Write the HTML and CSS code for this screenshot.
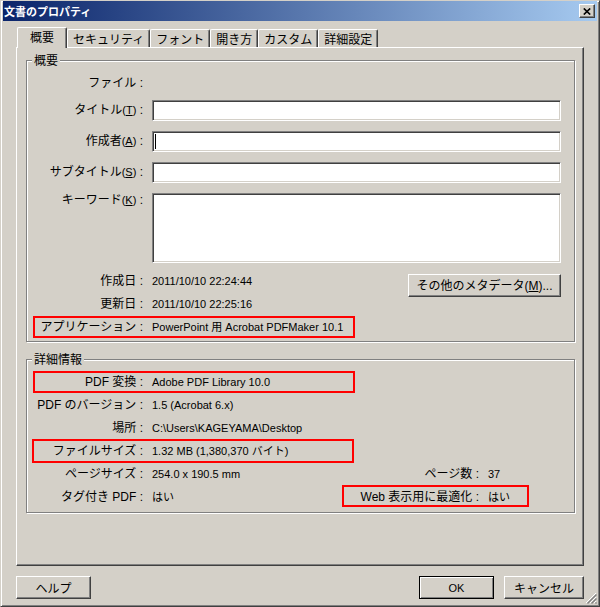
FILE: index.html
```html
<!DOCTYPE html>
<html lang="ja">
<head>
<meta charset="utf-8">
<title>文書のプロパティ</title>
<link rel="stylesheet" href="styles.css">
</head>
<body>
<div class="window">
  <div class="titlebar">
    <span class="title">文書のプロパティ</span>
    <span class="close"><svg width="8" height="7" viewBox="0 0 8 7"><path d="M0.8 0.5 L7.2 6.5 M7.2 0.5 L0.8 6.5" stroke="#000" stroke-width="1.7" fill="none"/></svg></span>
  </div>
  <div class="tabs">
    <div class="tab active">概要</div>
    <div class="tab">セキュリティ</div>
    <div class="tab">フォント</div>
    <div class="tab">開き方</div>
    <div class="tab">カスタム</div>
    <div class="tab">詳細設定</div>
  </div>
  <div class="panel">
    <div class="group g1">
      <div class="group-title">概要</div>
      <div class="row r-file"><div class="label">ファイル :</div></div>
      <div class="row r-field"><div class="label lf">タイトル<span class="ak">(<u>T</u>)</span> :</div><div class="field"></div></div>
      <div class="row r-field"><div class="label lf">作成者<span class="ak">(<u>A</u>)</span> :</div><div class="field"><span class="caret"></span></div></div>
      <div class="row r-field"><div class="label lf">サブタイトル<span class="ak">(<u>S</u>)</span> :</div><div class="field"></div></div>
      <div class="row r-field"><div class="label">キーワード<span class="ak">(<u>K</u>)</span> :</div><div class="field tall"></div></div>
      <div class="row r-date"><div class="label">作成日 :</div><div class="value">2011/10/10 22:24:44</div><div class="btn meta">その他のメタデータ(<u>M</u>)...</div></div>
      <div class="row"><div class="label">更新日 :</div><div class="value">2011/10/10 22:25:16</div></div>
      <div class="row r-app mark"><div class="label">アプリケーション :</div><div class="value">PowerPoint 用 Acrobat PDFMaker 10.1</div></div>
    </div>
    <div class="group g2">
      <div class="group-title">詳細情報</div>
      <div class="row d-row first mark m-conv"><div class="label">PDF 変換 :</div><div class="value">Adobe PDF Library 10.0</div></div>
      <div class="row d-row"><div class="label">PDF のバージョン :</div><div class="value">1.5 (Acrobat 6.x)</div></div>
      <div class="row d-row"><div class="label">場所 :</div><div class="value">C:\Users\KAGEYAMA\Desktop</div></div>
      <div class="row d-row mark m-size"><div class="label">ファイルサイズ :</div><div class="value">1.32 MB (1,380,370 バイト)</div></div>
      <div class="row d-row"><div class="label">ページサイズ :</div><div class="value w">254.0 x 190.5 mm</div><div class="label2">ページ数 :</div><div class="value">37</div></div>
      <div class="row d-row mark m-web"><div class="label">タグ付き PDF :</div><div class="value w">はい</div><div class="label2">Web 表示用に最適化 :</div><div class="value">はい</div></div>
    </div>
  </div>
  <div class="footer">
    <div class="btn help">ヘルプ</div>
    <div class="right">
      <div class="btn ok">OK</div>
      <div class="btn cancel">キャンセル</div>
    </div>
  </div>
  <svg class="grip" width="12" height="12" viewBox="0 0 12 12">
    <path d="M11 1 L1 11 M11 5 L5 11 M11 9 L9 11" stroke="#fff" stroke-width="1" fill="none"/>
    <path d="M11.5 2.5 L2.5 11.5 M11.5 6.5 L6.5 11.5 M11.5 10.5 L10.5 11.5" stroke="#808080" stroke-width="1.4" fill="none"/>
  </svg>
</div>
</body>
</html>
```
FILE: styles.css
```css
html, body {
  margin: 0;
  padding: 0;
  background: #d4d0c8;
}
body {
  font-family: "Noto Sans CJK JP", sans-serif;
  font-size: 12px;
  color: #000;
}
.window {
  position: relative;
  width: 600px;
  height: 607px;
  box-sizing: border-box;
  border: 1px solid;
  border-color: #d4d0c8 #404040 #404040 #d4d0c8;
  box-shadow: inset 1px 1px 0 #fff, inset -1px -1px 0 #808080;
  padding: 0 2px;
  background: #d4d0c8;
}
.titlebar {
  height: 20px;
  display: flex;
  align-items: center;
  justify-content: space-between;
  background: linear-gradient(to right, #0a246a, #a6caf0);
  padding-left: 1px;
}
.title {
  color: #fff;
  font-weight: bold;
  font-size: 11px;
  line-height: 14px;
}
.close {
  width: 16px;
  height: 14px;
  box-sizing: border-box;
  margin-right: 2px;
  background: #d4d0c8;
  border: 1px solid;
  border-color: #fff #404040 #404040 #fff;
  box-shadow: inset -1px -1px 0 #808080;
  display: flex;
  align-items: center;
  justify-content: center;
}
.close svg { display: block; }
.tabs {
  display: flex;
  align-items: flex-end;
  height: 20px;
  margin: 6px 0 0 14px;
}
.tab {
  height: 18px;
  box-sizing: border-box;
  padding: 0 5px;
  line-height: 17px;
  border-top: 1px solid #fff;
  border-left: 1px solid #fff;
  border-right: 1px solid #404040;
  box-shadow: inset -1px 0 0 #808080;
  border-radius: 2px 2px 0 0;
  white-space: nowrap;
}
.tab.active {
  position: relative;
  z-index: 1;
  height: 21px;
  line-height: 18px;
  padding: 0 12px;
  margin-bottom: -1px;
  background: #d4d0c8;
}
.panel {
  width: 568px;
  height: 519px;
  box-sizing: border-box;
  margin-left: 13px;
  border: 1px solid;
  border-color: #fff #404040 #404040 #fff;
  box-shadow: inset -1px -1px 0 #808080;
  padding: 12px 8px 0 9px;
}
.group {
  position: relative;
  box-sizing: border-box;
  border: 1px solid #808080;
  box-shadow: 1px 1px 0 #fff, inset 1px 1px 0 #fff;
  padding: 0 13px 0 0;
}
.g1 { height: 282px; }
.g2 { height: 154px; margin-top: 17px; }
.group-title {
  position: absolute;
  top: -8px;
  left: 5px;
  padding: 0 2px;
  line-height: 14px;
  background: #d4d0c8;
}
.row {
  display: flex;
  align-items: flex-start;
  line-height: 14px;
}
.label {
  width: 116px;
  flex: none;
  text-align: right;
  white-space: nowrap;
  font-family: "Liberation Sans", "Noto Sans CJK JP", sans-serif;
}
.label.lf { line-height: 21px; }
.ak { font-family: "Liberation Sans", sans-serif; font-size: 11px; }
.value {
  margin-left: 9px;
  font-family: "Liberation Sans", "Noto Sans CJK JP", sans-serif;
  font-size: 11px;
  white-space: nowrap;
}
.value.w { width: 197px; flex: none; }
.label2 {
  width: 130px;
  flex: none;
  text-align: right;
  white-space: nowrap;
  font-family: "Liberation Sans", "Noto Sans CJK JP", sans-serif;
}
.r-file { margin-top: 15px; }
.r-field { margin-top: 10px; }
.field {
  flex: 1;
  margin-left: 9px;
  height: 21px;
  box-sizing: border-box;
  background: #fff;
  border: 1px solid;
  border-color: #808080 #fff #fff #808080;
  box-shadow: inset 1px 1px 0 #404040, inset -1px -1px 0 #d4d0c8;
  position: relative;
}
.field.tall { height: 70px; }
.caret {
  position: absolute;
  left: 2px;
  top: 2px;
  width: 1px;
  height: 15px;
  background: #000;
}
.r-date { margin-top: 11px; height: 23px; }
.btn {
  box-sizing: border-box;
  height: 23px;
  background: #d4d0c8;
  border: 1px solid;
  border-color: #fff #404040 #404040 #fff;
  box-shadow: inset -1px -1px 0 #808080;
  display: flex;
  align-items: center;
  justify-content: center;
  white-space: nowrap;
  font-family: "Liberation Sans", "Noto Sans CJK JP", sans-serif;
}
.meta { width: 153px; margin-left: auto; }
.r-app { margin-top: 9px; }
.mark { position: relative; }
.mark::after {
  content: "";
  position: absolute;
  box-sizing: border-box;
  border: 2px solid #f00;
}
.r-app::after { left: 6px; width: 322px; top: -4px; height: 22px; }
.d-row { height: 23px; line-height: 23px; }
.d-row.first { margin-top: 11px; }
.m-conv::after { left: 6px; width: 322px; top: 0; height: 22px; }
.m-size::after { left: 5px; width: 322px; top: -1px; height: 24px; }
.m-web::after { left: 315px; width: 187px; top: -1px; height: 22px; }
.footer {
  display: flex;
  justify-content: space-between;
  margin: 10px 13px 0 13px;
}
.right { display: flex; gap: 10px; }
.help { width: 75px; }
.ok {
  width: 75px;
  border-color: #000;
  box-shadow: inset 1px 1px 0 #fff, inset -1px -1px 0 #808080;
  font-size: 11px;
}
.cancel { width: 80px; }
.grip {
  position: absolute;
  right: 2px;
  bottom: 2px;
}
```
